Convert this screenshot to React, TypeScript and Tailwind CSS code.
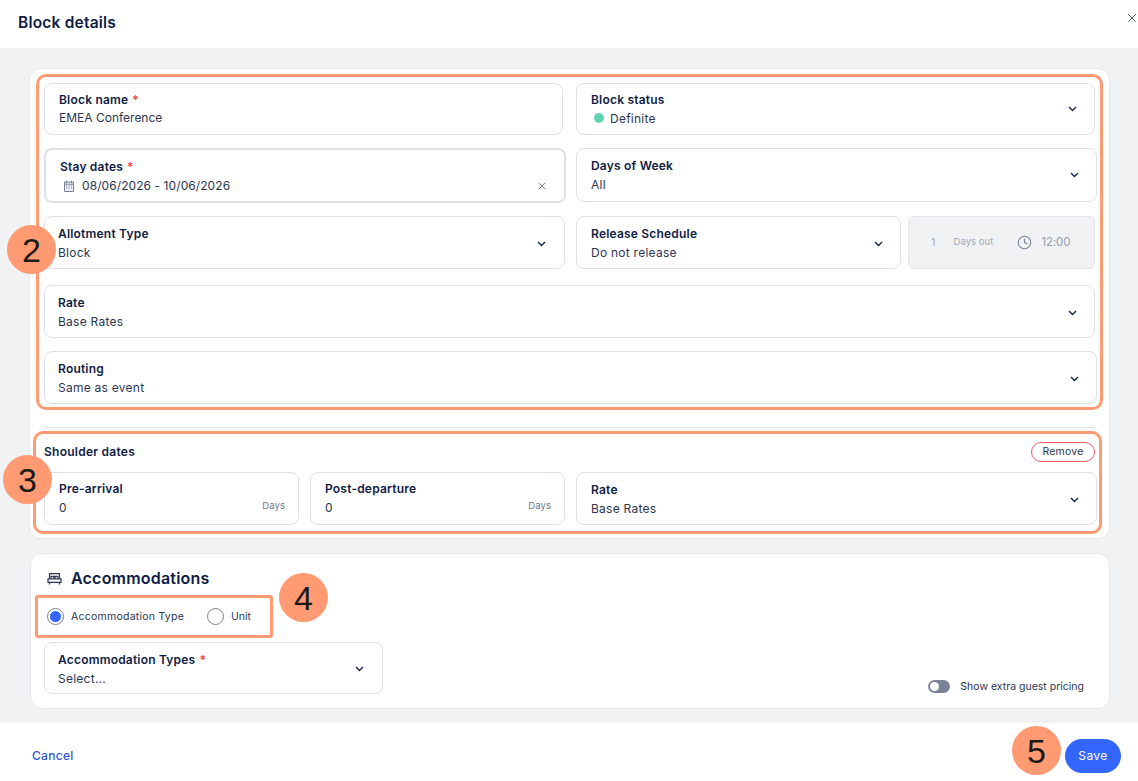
import React from "react";
import { Clock, X } from "lucide-react";

function Chevron() {
  return (
    <svg width="9" height="6" viewBox="0 0 9 6" fill="none" className="shrink-0">
      <path d="M1 1l3.5 3.5L8 1" stroke="#17224d" strokeWidth="1.4" />
    </svg>
  );
}

function BedIcon() {
  return (
    <svg width="15" height="13" viewBox="0 0 15 13" fill="none" stroke="#2c3654" strokeWidth="1.2" className="shrink-0">
      <path d="M2.5 6.5V1.6h10v4.9" />
      <path d="M4 6.5V4.4h3v2.1M8 6.5V4.4h3v2.1" />
      <path d="M1 6.8h13v3.6H1zM2.5 10.4v2M12.5 10.4v2" />
    </svg>
  );
}

function CalendarIcon() {
  return (
    <svg width="12" height="12" viewBox="0 0 12 12" fill="none" className="shrink-0">
      <path d="M1.5 2h9v9.5h-9z" fill="#eceef2" stroke="#7a8296" />
      <path d="M1.5 4.2h9M3.5 .5v2.5M8.5 .5v2.5" stroke="#7a8296" />
      <path d="M3 6h1M5.5 6h1M8 6h1M3 8h1M5.5 8h1M8 8h1" stroke="#7a8296" />
    </svg>
  );
}

function Req() {
  return <span className="ml-[4px] text-[#ef4444]">*</span>;
}

function Label({ children }: { children: React.ReactNode }) {
  return <div className="text-[12px] leading-[18px] font-semibold tracking-[0.2px] text-[#0f1c44] whitespace-nowrap">{children}</div>;
}

function Value({ children, className = "tracking-[0.25px]" }: { children: React.ReactNode; className?: string }) {
  return <div className={`text-[12px] leading-[19px] text-[#2c3654] whitespace-nowrap ${className}`}>{children}</div>;
}

function Select({ label, value, req, className }: { label: string; value: React.ReactNode; req?: boolean; className: string }) {
  return (
    <div className={`flex items-center justify-between rounded-[8px] border border-[#dfe1e7] bg-white ${className}`}>
      <div>
        <Label>
          {label}
          {req && <Req />}
        </Label>
        <Value>{value}</Value>
      </div>
      <Chevron />
    </div>
  );
}

function Badge({ n, className }: { n: string; className: string }) {
  return (
    <div className={`absolute flex h-[49px] w-[49px] items-center justify-center rounded-full bg-[#ff9a73] text-[34px] leading-none text-[#1c1a17] font-['Liberation_Sans',sans-serif] ${className}`}>
      {n}
    </div>
  );
}

export default function App() {
  return (
    <div className="relative flex h-[781px] w-[1138px] flex-col overflow-hidden bg-white font-['Inter',sans-serif]">
      <header className="relative flex h-[48px] shrink-0 items-center pl-[18px] pb-[2px]">
        <h1 className="text-[15.5px] font-semibold tracking-[0.2px] text-[#0f1c44]">Block details</h1>
        <X size={14} strokeWidth={1.3} className="absolute right-[-1px] top-[11px] text-[#17224d]" />
      </header>

      <main className="flex h-[675px] shrink-0 flex-col bg-[#f1f2f4] pl-[29px] pr-[28px] pt-[20px]">
        <section className="h-[471px] shrink-0 rounded-[12px] border border-[#e6e8ec] bg-white pl-[6px] pr-[6px] pt-[5px]">
          <div className="h-[336px] rounded-[10px] border-[3px] border-[#ff9a73] pl-[5px] pt-[6px]">
            <div className="flex gap-[13px]">
              <div className="h-[52px] w-[519px] rounded-[8px] border border-[#dfe1e7] pl-[14px] pt-[7px]">
                <Label>Block name<Req /></Label>
                <div className="pt-[1px] text-[12px] leading-[16px] text-[#2c3654]">EMEA Conference</div>
              </div>
              <Select
                label="Block status"
                value={<span className="flex items-center gap-[6px] pl-[3px]"><span className="h-[10px] w-[10px] rounded-full bg-[#62d3b3]" />Definite</span>}
                className="h-[52px] w-[519px] pl-[14px] pr-[17px]"
              />
            </div>
            <div className="mt-[13px] flex gap-[10px]">
              <div className="h-[55px] w-[522px] rounded-[8px] border-2 border-[#dfe1e7] pl-[14px] pr-[16px] pt-[8px]">
                <Label>Stay dates<Req /></Label>
                <div className="flex items-center justify-between">
                  <div className="flex items-center gap-[7px] pl-[3px]">
                    <CalendarIcon />
                    <Value className="tracking-[0.08px]">08/06/2026 - 10/06/2026</Value>
                  </div>
                  <X size={12} strokeWidth={2} className="text-[#7a8296]" />
                </div>
              </div>
              <Select label="Days of Week" value="All" className="h-[54px] w-[521px] pl-[14px] pr-[17px]" />
            </div>
            <div className="mt-[13px] flex">
              <Select label="Allotment Type" value="Block" className="h-[53px] w-[521px] pl-[13px] pr-[18px] pt-[2px]" />
              <Select label="Release Schedule" value="Do not release" className="ml-[11px] h-[53px] w-[325px] pl-[14px] pr-[17px] pt-[2px]" />
              <div className="ml-[7px] flex h-[53px] w-[187px] items-center rounded-[6px] border border-[#e3e5ea] bg-[#f1f2f4] pl-[22px] text-[#a4abbb]">
                <span className="text-[11px]">1</span>
                <span className="ml-[18px] text-[9.5px] tracking-[0.05px]">Days out</span>
                <Clock size={15} strokeWidth={1.7} className="ml-[24px] text-[#7a8296]" />
                <span className="ml-[9px] text-[11.5px] tracking-[-0.1px] text-[#959cae]">12:00</span>
              </div>
            </div>
            <Select label="Rate" value="Base Rates" className="mt-[16px] h-[53px] w-[1051px] pl-[13px] pr-[17px] pt-[2px]" />
            <Select label="Routing" value="Same as event" className="mt-[13px] h-[53px] w-[1053px] pl-[13px] pr-[17px] pt-[2px]" />
          </div>

          <div className="ml-[8px] mr-[7px] mt-[17px] h-px bg-[#e6e8ec]" />

          <div className="-ml-[3px] mt-[3px] h-[103px] w-[1069px] rounded-[10px] border-[3px] border-[#ff9a73] pl-[8px] pt-[8px]">
            <div className="flex h-[20px] items-center justify-between pr-[4px]">
              <span className="text-[12px] font-semibold tracking-[0.25px] text-[#0f1c44]">Shoulder dates</span>
              <span className="flex h-[20px] w-[64px] items-center justify-center rounded-full border border-[#ee5a66] text-[10.5px] tracking-[0.2px] text-[#2c3654]">Remove</span>
            </div>
            <div className="mt-[10px] flex gap-[11px]">
              {["Pre-arrival", "Post-departure"].map((l) => (
                <div key={l} className="relative h-[53px] w-[255px] rounded-[8px] border border-[#dfe1e7] pl-[14px] pt-[7px]">
                  <Label>{l}</Label>
                  <Value>0</Value>
                  <span className="absolute right-[13px] top-[26px] text-[9.5px] tracking-[0.1px] text-[#70788c]">Days</span>
                </div>
              ))}
              <Select label="Rate" value="Base Rates" className="h-[53px] w-[521px] pl-[14px] pr-[17px] pt-[2px]" />
            </div>
          </div>
        </section>

        <section className="relative ml-[1px] mt-[14px] h-[156px] w-[1080px] shrink-0 rounded-[12px] border border-[#e6e8ec] bg-white pl-[4px] pt-[12px]">
          <div className="flex h-[24px] items-center pl-[12px]">
            <BedIcon />
            <span className="ml-[9px] text-[16px] font-semibold tracking-[0.2px] text-[#0f1c44]">Accommodations</span>
          </div>
          <div className="mt-[5px] flex h-[43px] w-[238px] items-center rounded-[3px] border-[3px] border-[#ff9a73] pl-[9px] text-[10.5px] tracking-[0.25px] text-[#2c3654]">
            <span className="flex h-[17px] w-[17px] items-center justify-center rounded-full border border-[#7a8296]">
              <span className="h-[11px] w-[11px] rounded-full bg-[#3366ff]" />
            </span>
            <span className="ml-[7px] w-[136px] whitespace-nowrap">Accommodation Type</span>
            <span className="h-[17px] w-[17px] rounded-full border border-[#7a8296]" />
            <span className="ml-[7px] tracking-normal">Unit</span>
          </div>
          <Select label="Accommodation Types" req value="Select..." className="ml-[9px] mt-[4px] h-[52px] w-[339px] pl-[13px] pr-[18px] pt-[2px]" />
          <div className="absolute right-[25px] top-[125px] flex items-center">
            <span className="flex h-[13px] w-[22px] items-center rounded-full bg-[#7a8296] pl-[2px]">
              <span className="h-[9px] w-[9px] rounded-full bg-white" />
            </span>
            <span className="ml-[10px] text-[10.5px] text-[#2c3654]">Show extra guest pricing</span>
          </div>
        </section>
      </main>

      <footer className="flex h-[58px] shrink-0 items-center justify-between pl-[32px] pr-[17px] pt-[8px]">
        <span className="text-[12px] font-medium tracking-[0.3px] text-[#2f55d4]">Cancel</span>
        <span className="flex h-[34px] w-[56px] items-center justify-center rounded-full bg-[#3366ff] text-[12px] font-normal tracking-[0.4px] text-white">Save</span>
      </footer>

      <Badge n="2" className="left-[7px] top-[225px]" />
      <Badge n="3" className="left-[3px] top-[455px]" />
      <Badge n="4" className="left-[279px] top-[573px]" />
      <Badge n="5" className="left-[1012px] top-[726px]" />
    </div>
  );
}
